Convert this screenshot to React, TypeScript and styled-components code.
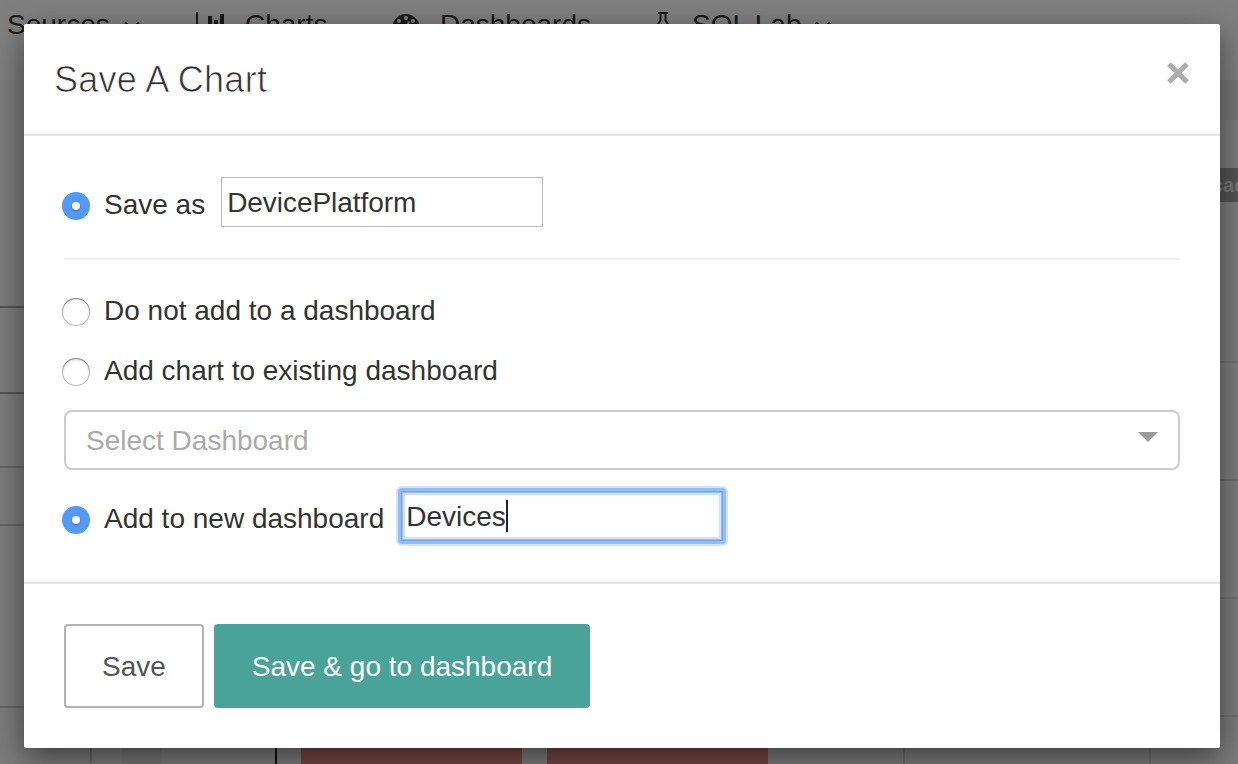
import React from 'react';
import styled, { createGlobalStyle } from 'styled-components';

const GlobalStyle = createGlobalStyle`
  * { box-sizing: border-box; }
  body {
    margin: 0;
    overflow: hidden;
    font-family: "Liberation Sans", Arial, sans-serif;
    font-size: 28px;
    color: #333;
  }
`;

const Screen = styled.div`
  position: relative;
  display: flex;
  flex-direction: column;
  width: 1238px;
  height: 764px;
  overflow: hidden;
  background: #f9f9f9;
`;

const NavBar = styled.nav`
  flex: none;
  display: flex;
  height: 80px;
  padding: 8px 0 0 7px;
  background: #fff;
`;

const NavItem = styled.div<{ $width: number }>`
  flex: none;
  display: flex;
  width: ${(p) => p.$width}px;
  height: 32px;
  line-height: 33px;
  white-space: nowrap;
`;

const NavIcon = styled.svg<{ $gap: number }>`
  flex: none;
  display: block;
  height: 32px;
  margin-right: ${(p) => p.$gap}px;
`;

const Chevron = styled.svg`
  display: block;
  width: 20px;
  height: 32px;
  margin-left: 12px;
`;

const Workspace = styled.div`
  flex: 1;
  display: flex;
`;

const SidePanel = styled.div`
  flex: none;
  display: flex;
  flex-direction: column;
  width: 92px;
  padding-top: 120px;
`;

const PanelRow = styled.div<{ $height: number; $shade: string }>`
  flex: none;
  height: ${(p) => p.$height}px;
  border-bottom: 2px solid ${(p) => p.$shade};
`;

const PanelEdge = styled.div`
  flex: 1;
  border-right: 2px solid #c8c8c8;
  border-bottom-right-radius: 4px;
`;

const ChartArea = styled.div`
  flex: 1;
  display: flex;
  flex-direction: column;
`;

const Toolbar = styled.div`
  flex: none;
  height: 40px;
  background: #ececec;
`;

const TagLine = styled.div`
  flex: none;
  display: flex;
  justify-content: flex-end;
  height: 82px;
  padding-top: 48px;
`;

const Tag = styled.div`
  flex: none;
  width: 28px;
  height: 34px;
  padding-left: 2px;
  overflow: hidden;
  background: #a6a6a6;
  color: #f0f0f0;
  font-size: 20px;
  font-weight: bold;
  line-height: 34px;
`;

const Gridlines = styled.div`
  flex: 1;
  display: flex;
  flex-direction: column;
  padding-top: 43px;
`;

const GridRow = styled.div`
  flex: none;
  height: 118px;
  border-bottom: 2px solid #dcdcdc;
`;

const PlotFoot = styled.div`
  flex: none;
  display: flex;
  height: 24px;
  padding-left: 30px;
`;

const Segment = styled.div<{ $width: number; $color?: string; $edge?: string }>`
  flex: none;
  width: ${(p) => p.$width}px;
  background: ${(p) => p.$color ?? 'transparent'};
  border-right: ${(p) => (p.$edge ? `2px solid ${p.$edge}` : 'none')};
`;

const Backdrop = styled.div`
  position: absolute;
  inset: 0;
  display: flex;
  padding: 24px 18px 16px 24px;
  background: rgba(0, 0, 0, 0.5);
`;

const Dialog = styled.section`
  flex: 1;
  display: flex;
  flex-direction: column;
  border-radius: 2px;
  background: #fff;
  box-shadow: 0 10px 30px rgba(0, 0, 0, 0.5);
`;

const Header = styled.header`
  flex: none;
  display: flex;
  justify-content: space-between;
  height: 112px;
  padding: 35px 30px 0;
  border-bottom: 2px solid #e5e5e5;
`;

const Title = styled.h1`
  margin: 0;
  font-size: 36px;
  font-weight: 400;
  line-height: 41px;
  letter-spacing: 0.25px;
  -webkit-text-stroke: 0.7px #fff;
`;

const CloseIcon = styled.svg`
  display: block;
  width: 24px;
  height: 24px;
  margin-top: 2px;
`;

const Body = styled.div`
  flex: none;
  height: 446px;
  padding: 41px 40px 0;
`;

const FieldRow = styled.div`
  display: flex;
  height: 50px;
`;

const Choice = styled.label<{ $top: number; $gap?: number }>`
  display: flex;
  margin: ${(p) => p.$top}px ${(p) => p.$gap ?? 0}px 0 -2px;
  height: 40px;
  line-height: 40px;
  white-space: nowrap;
`;

const Radio = styled.span<{ $checked?: boolean }>`
  flex: none;
  display: flex;
  align-items: center;
  justify-content: center;
  width: 28px;
  height: 28px;
  margin: 7px 14px 0 0;
  border-radius: 50%;
  background: ${(p) => (p.$checked ? '#5499f8' : '#fff')};
  box-shadow: ${(p) =>
    p.$checked
      ? 'none'
      : 'inset 0 0 0 1px rgba(0,0,0,.24), inset 0 1px 1px rgba(0,0,0,.25), inset 0 2px 4px rgba(0,0,0,.12)'};
`;

const RadioDot = styled.span`
  width: 8px;
  height: 8px;
  border-radius: 50%;
  background: #fff;
  box-shadow: 0 1px 2px rgba(0, 0, 0, 0.3);
`;

const TextInput = styled.input`
  width: 322px;
  height: 50px;
  padding: 2px 5px 0;
  border: 1px solid #bbb;
  border-radius: 0;
  outline: none;
  background: #fff;
  color: #333;
  font: inherit;
  letter-spacing: -0.06px;
`;

const FocusRing = styled.div`
  flex: none;
  width: 328px;
  height: 56px;
  margin: -3px 0 0 1px;
  padding: 3px;
  border-radius: 4px;
  background: #94bdf8;
  box-shadow: 0 0 0 2px #d3e3fc;
`;

const ActiveInput = styled.div`
  display: flex;
  align-items: center;
  width: 322px;
  height: 50px;
  padding-left: 4px;
  border: 1px solid #79a5e2;
  background: #fff;
  box-shadow: inset 0 0 0 1px #94bdf8, inset 0 0 0 3px #d3e3fc;
`;

const TypedText = styled.span`
  padding-top: 2px;
  line-height: 32px;
`;

const Caret = styled.span`
  width: 2px;
  height: 32px;
  background: #222;
`;

const Divider = styled.hr`
  height: 2px;
  margin: 31px 0 0;
  border: 0;
  background: #f0f0f0;
`;

const Select = styled.div`
  display: flex;
  justify-content: space-between;
  height: 60px;
  margin: 19px 0 21px;
  padding: 0 20px;
  border: 2px solid #ccc;
  border-radius: 8px;
  color: #aaa;
  line-height: 57px;
`;

const SelectArrow = styled.span`
  width: 0;
  height: 0;
  margin-top: 20px;
  border: 10px solid transparent;
  border-top-color: #999;
  border-bottom: 0;
`;

const Footer = styled.footer`
  flex: 1;
  display: flex;
  gap: 10px;
  padding: 40px;
  border-top: 2px solid #e5e5e5;
`;

const Button = styled.button<{ $width: number; $primary?: boolean }>`
  width: ${(p) => p.$width}px;
  height: 84px;
  padding: 2px 0 0;
  border: 2px solid ${(p) => (p.$primary ? '#4aa398' : '#b3b3b3')};
  border-radius: 4px;
  background: ${(p) => (p.$primary ? '#4aa398' : '#fff')};
  color: ${(p) => (p.$primary ? '#fff' : '#555')};
  font: inherit;
`;

const DownChevron = () => (
  <Chevron viewBox="0 0 20 32" fill="none" stroke="#333" strokeWidth="2.4">
    <path d="M3 14.5l7 7 7-7" />
  </Chevron>
);

export default function App() {
  return (
    <Screen>
      <GlobalStyle />
      <NavBar>
        <NavItem $width={188}>
          Sources
          <DownChevron />
        </NavItem>
        <NavItem $width={197}>
          <NavIcon $gap={18} width="32" viewBox="0 0 32 32" fill="#333">
            <path d="M1 4h2v22h27v2H1zM13 8h4v16h-4zM19 12h4v12h-4zM25 6h4v18h-4zM7 16h4v8H7z" />
          </NavIcon>
          Charts
        </NavItem>
        <NavItem $width={260}>
          <NavIcon $gap={20} width="28" viewBox="0 0 28 32">
            <path fill="#333" d="M14 6a14 14 0 0 0-12 21h24A14 14 0 0 0 14 6z" />
            <g fill="#fff">
              <circle cx="14" cy="10" r="2" />
              <circle cx="7" cy="13" r="2" />
              <circle cx="21" cy="13" r="2" />
              <circle cx="4" cy="20" r="2" />
              <circle cx="24" cy="20" r="2" />
            </g>
            <path d="M16.8 13.5L14 23" stroke="#fff" strokeWidth="2" />
          </NavIcon>
          Dashboards
        </NavItem>
        <NavItem $width={200}>
          <NavIcon $gap={14} width="26" viewBox="0 0 26 32" fill="none" stroke="#333" strokeWidth="2">
            <path d="M6 5h10M8.5 5v7L1 26h20L13.5 12V5" />
          </NavIcon>
          SQL Lab
          <DownChevron />
        </NavItem>
      </NavBar>
      <Workspace>
        <SidePanel>
          <PanelRow $height={108} $shade="#a8a8a8" />
          <PanelRow $height={86} $shade="#a8a8a8" />
          <PanelRow $height={74} $shade="#c8c8c8" />
          <PanelRow $height={58} $shade="#c8c8c8" />
          <PanelRow $height={182} $shade="#c8c8c8" />
          <PanelEdge />
        </SidePanel>
        <ChartArea>
          <Toolbar />
          <TagLine>
            <Tag>cac</Tag>
          </TagLine>
          <Gridlines>
            <GridRow />
            <GridRow />
            <GridRow />
            <GridRow />
          </Gridlines>
          <PlotFoot>
            <Segment $width={40} $color="#ececec" />
            <Segment $width={115} $edge="#222" />
            <Segment $width={24} />
            <Segment $width={221} $color="#ea8c88" />
            <Segment $width={25} />
            <Segment $width={221} $color="#ea8c88" />
            <Segment $width={137} $edge="#dcdcdc" />
            <Segment $width={246} $edge="#dcdcdc" />
          </PlotFoot>
        </ChartArea>
      </Workspace>
      <Backdrop>
        <Dialog>
          <Header>
            <Title>Save A Chart</Title>
            <CloseIcon viewBox="0 0 24 24" stroke="#adadad" strokeWidth="5.2">
              <path d="M3 3l18 18M21 3L3 21" />
            </CloseIcon>
          </Header>
          <Body>
            <FieldRow>
              <Choice $top={8} $gap={16}>
                <Radio $checked>
                  <RadioDot />
                </Radio>
                Save as
              </Choice>
              <TextInput defaultValue="DevicePlatform" />
            </FieldRow>
            <Divider />
            <Choice $top={31}>
              <Radio />
              Do not add to a dashboard
            </Choice>
            <Choice $top={20}>
              <Radio />
              Add chart to existing dashboard
            </Choice>
            <Select>
              Select Dashboard
              <SelectArrow />
            </Select>
            <FieldRow>
              <Choice $top={8} $gap={13}>
                <Radio $checked>
                  <RadioDot />
                </Radio>
                Add to new dashboard
              </Choice>
              <FocusRing>
                <ActiveInput>
                  <TypedText>Devices</TypedText>
                  <Caret />
                </ActiveInput>
              </FocusRing>
            </FieldRow>
          </Body>
          <Footer>
            <Button $width={140}>Save</Button>
            <Button $width={376} $primary>
              Save &amp; go to dashboard
            </Button>
          </Footer>
        </Dialog>
      </Backdrop>
    </Screen>
  );
}
